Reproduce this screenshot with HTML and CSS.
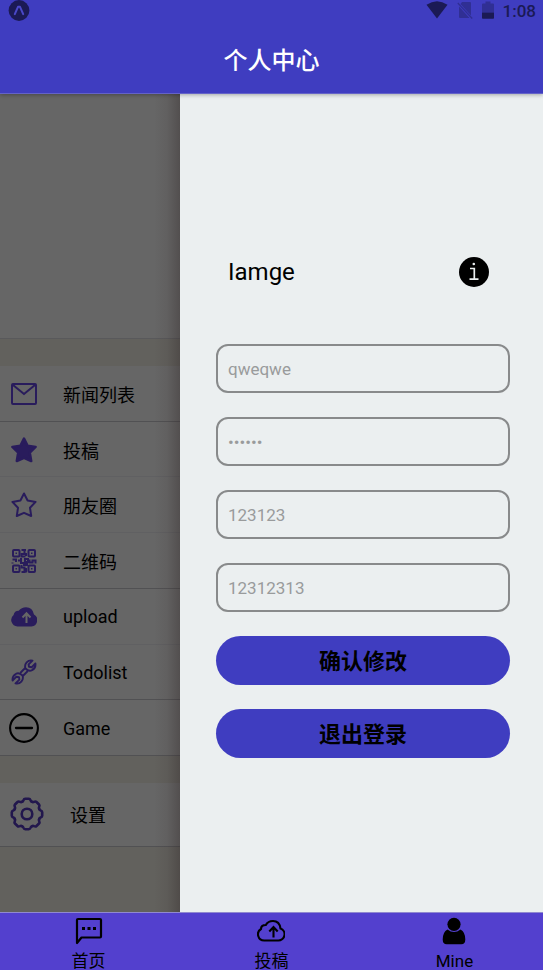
FILE: index.html
```html
<!DOCTYPE html>
<html lang="zh-CN">
<head>
<meta charset="utf-8">
<meta name="viewport" content="width=device-width, initial-scale=1">
<title>个人中心</title>
<link rel="stylesheet" href="styles.css">
</head>
<body>
<header class="header">
  <div class="status">
    <svg class="status-app" width="22" height="22" viewBox="0 0 22 22"><circle cx="11" cy="10.5" r="10.4" fill="#1b1a55"/><path d="M6.800 14.200 10 6.800h2l3.200 7.400" fill="none" stroke="#4a48c8" stroke-width="2" stroke-linecap="round" stroke-linejoin="round"/></svg>
    <div class="status-right">
      <svg width="22" height="18" viewBox="0 0 22 18"><path d="M.5 3.800Q11-3.200 21.500 3.800L11 17.500Z" fill="#1b1a55"/></svg>
      <svg width="16" height="18" viewBox="0 0 16 18"><path d="M5 1h8q1 0 1 1v12.500L3.500 3ZM2 5.500 12.500 17H3q-1 0-1-1Z" fill="#302f94"/><path d="M.8 2 15.200 17.500" stroke="#302f94" stroke-width="1.300"/></svg>
      <svg width="12" height="18" viewBox="0 0 12 18"><path d="M3.500.5h5v2H11q1 0 1 1v8H0v-8q0-1 1-1h2.500Z" fill="#302f94"/><path d="M0 11.500h12V17q0 .8-.8.8H.8Q0 17.800 0 17Z" fill="#1b1a55"/></svg>
      <span class="clock">1:08</span>
    </div>
  </div>
  <h1 class="title">个人中心</h1>
</header>

<main class="body">
  <nav class="menu" aria-label="菜单">
    <div class="banner"></div>
    <div class="list">
      <a class="row strong" href="#"><svg class="icon" viewBox="0 0 26 26"><rect x="1" y="3" width="24" height="20" rx="1" fill="none" stroke="currentColor" stroke-width="2"/><path d="m2 4 11 9L24 4" fill="none" stroke="currentColor" stroke-width="2"/></svg>新闻列表</a>
      <a class="row" href="#"><svg class="icon" viewBox="0 0 26 26"><path d="m13 1.500 3.600 7.200 8 1.200-5.800 5.700 1.400 8.400L13 20.800 5.800 24l1.400-8.400L1.400 9.900l8-1.200Z" fill="currentColor" stroke="currentColor" stroke-width="2.500" stroke-linejoin="round"/></svg>投稿</a>
      <a class="row" href="#"><svg class="icon" viewBox="0 0 26 26"><path d="m13 1.500 3.600 7 8 1.400-5.600 5.900 1.200 8.200-7.200-3.200L5.800 24 7 15.800 1.400 9.900l8-1.400Z" fill="none" stroke="currentColor" stroke-width="2" stroke-linejoin="round"/></svg>朋友圈</a>
      <a class="row strong" href="#"><svg class="icon" viewBox="0 0 26 26"><g fill="none" stroke="currentColor" stroke-width="2"><rect x="2" y="2" width="6.500" height="6.500" rx="1"/><rect x="17.500" y="2" width="6.500" height="6.500" rx="1"/><rect x="2" y="17.500" width="6.500" height="6.500" rx="1"/><rect x="17.500" y="17.500" width="6.500" height="6.500" rx="1"/><path d="M10.500 2H15M13.500 2v4h-3v2.500h4M15 5v3M1.500 11.500H5v2.500M1.500 14.500v1M7 12.500h3V10M10 12.500V15h4v-4h3v3h-3M12 17h4v-2.500M10.500 17v2.500h3V24h-3M15 20v4.500M18.500 11.500v3h3v-2h3v3"/></g><g fill="currentColor"><path d="M4.500 4.500H6V6H4.500zM20 4.500h1.500V6H20zM4.500 20H6v1.500H4.500zM20 20h1.500v1.500H20z"/></g></svg>二维码</a>
      <a class="row" href="#"><svg class="icon" viewBox="0 0 26 26"><path d="M6.500 22.500A6.500 6.500 0 0 1 2.600 11Q3.300 6.700 7.700 6.700 10.500 3.200 15 3.200q6.500 0 8 7.200A6.500 6.500 0 0 1 20.500 22.500Z" fill="currentColor"/><path d="M15.500 19V9.500M11.500 13.500l4-4.200 4 4.200" fill="none" stroke="#666" stroke-width="2"/></svg>upload</a>
      <a class="row strong" href="#"><svg class="icon" viewBox="0 0 26 26"><g fill="none" stroke="currentColor" stroke-width="1.900" stroke-linejoin="round"><path id="jaw" d="M21.500 1.600A6 6 0 0 0 14.500 9.500Q18 13 21 11.200 25 9 24.400 4.500L20.600 8.300 18 7.800 17.600 5.400Z"/><use href="#jaw" transform="rotate(180 13 13)"/><path d="m14.200 9-5 5M16.800 12l-5 5"/></g></svg>Todolist</a>
      <a class="row strong" href="#"><svg class="icon round" viewBox="0 0 30 30"><circle cx="15" cy="15" r="13.900" fill="none" stroke="currentColor" stroke-width="2.100"/><path d="M7 15h16" stroke="currentColor" stroke-width="2.300" stroke-linecap="round"/></svg>Game</a>
    </div>
    <a class="settings" href="#"><svg class="gear" viewBox="-17 -17 34 34"><defs><path id="tooth" d="M-5.050-12.200Q-4-12.300-3.600-13.600-3-15.200-1.800-15.200H1.800Q3-15.200 3.600-13.600 4-12.300 5.050-12.200"/></defs><g fill="none" stroke="currentColor" stroke-width="2.600" stroke-linecap="round"><use href="#tooth"/><use href="#tooth" transform="rotate(45)"/><use href="#tooth" transform="rotate(90)"/><use href="#tooth" transform="rotate(135)"/><use href="#tooth" transform="rotate(180)"/><use href="#tooth" transform="rotate(225)"/><use href="#tooth" transform="rotate(270)"/><use href="#tooth" transform="rotate(315)"/><circle r="5.300"/></g></svg>设置</a>
  </nav>

  <section class="drawer">
    <div class="profile">
      <h2 class="name">Iamge</h2>
      <svg width="30" height="30" viewBox="0 0 30 30"><circle cx="15" cy="15" r="15"/><path d="M11 11.500h4.300V22M10.500 22.200h9" fill="none" stroke="#ebeff0" stroke-width="1.700"/><circle cx="14.800" cy="7" r="1.300" fill="#ebeff0"/></svg>
    </div>
    <form class="form">
      <input class="field" type="text" aria-label="用户名" placeholder="qweqwe">
      <input class="field" type="password" aria-label="密码" value="qweqwe">
      <input class="field" type="text" aria-label="昵称" placeholder="123123">
      <input class="field" type="text" aria-label="电话" placeholder="12312313">
      <button class="button" type="button">确认修改</button>
      <button class="button" type="button">退出登录</button>
    </form>
  </section>
</main>

<nav class="tabs" aria-label="导航">
  <a class="tab" href="#"><svg viewBox="0 0 28 28"><path d="M2 26V3q0-1 1-1h22q1 0 1 1v16.500q0 1-1 1H6.500Z" fill="none" stroke="currentColor" stroke-width="2.200" stroke-linejoin="round"/><path d="M7 10h3v3H7zM12.500 10h3v3h-3zM18 10h3v3h-3z"/></svg>首页</a>
  <a class="tab" href="#"><svg viewBox="0 0 28 28"><path d="M7.200 23.500A6.200 6.200 0 0 1 4 12Q4 8 8.800 8 11 4 16 4q6.500 0 7.500 7.500A6.200 6.200 0 0 1 21 23.500Z" fill="none" stroke="currentColor" stroke-width="2.100"/><path d="M16.500 20.500V10M12.300 14.500l4.200-4.500 4.200 4.500" fill="none" stroke="currentColor" stroke-width="2.100"/></svg>投稿</a>
  <a class="tab" href="#"><svg viewBox="0 0 28 28"><circle cx="14" cy="7.300" r="6.600"/><path d="M7.500 12.500q6.500 5 13 0 4.800 2.500 4.800 10 0 4.700-4 4.700H6.700q-4 0-4-4.700 0-7.500 4.800-10Z"/></svg>Mine</a>
</nav>
</body>
</html>
```
FILE: styles.css
```css
* {
  box-sizing: border-box;
}

body {
  margin: 0;
  min-height: 100vh;
  display: flex;
  flex-direction: column;
  font-family: Roboto, "Noto Sans CJK SC", sans-serif;
  color: #000;
  background: #ebeff0;
}

a {
  color: inherit;
  text-decoration: none;
}

svg {
  display: block;
  flex: none;
}

.header {
  position: relative;
  z-index: 1;
  background: #3f3dc0;
  border-bottom: 1px solid #6462c8;
  box-shadow: 0 1px 4px rgba(0, 0, 0, 0.3);
}

.status {
  display: flex;
  justify-content: space-between;
  height: 24px;
  padding: 0 7px 0 8px;
}

.status-right {
  display: flex;
  align-items: flex-start;
  gap: 9px;
  padding-top: 1px;
  color: #1b1a55;
}

.clock {
  font-size: 17px;
  line-height: 20px;
  font-weight: 500;
}

.title {
  margin: 0;
  padding: 19px 0 14px;
  font-size: 24px;
  line-height: 36px;
  font-weight: 500;
  text-align: center;
  color: #fff;
}

.body {
  flex: 1;
  display: grid;
  grid-template-columns: 180px 1fr;
}

.menu {
  position: relative;
  background: #62615d;
}

.menu::after {
  content: "";
  position: absolute;
  inset: 0 0 0 auto;
  width: 26px;
  background: linear-gradient(to left, rgba(45, 35, 35, 0.35), rgba(60, 50, 50, 0.12) 50%, rgba(60, 50, 50, 0));
  pointer-events: none;
}

.banner {
  height: 245px;
  border-bottom: 1px solid #59595b;
}

.banner,
.row,
.settings {
  background: #666;
}

.list {
  display: grid;
  grid-auto-rows: 1fr;
  height: 390px;
  margin: 27px 0;
}

.row {
  display: flex;
  align-items: center;
  padding: 1px 0 0 11px;
  border-bottom: 1px solid #606062;
  font-size: 18px;
}

.strong {
  border-color: #515153;
}

.icon {
  width: 26px;
  height: 26px;
  margin-right: 26px;
  color: #291c5c;
}

.round {
  width: 30px;
  height: 30px;
  margin: 0 24px 0 -2px;
  color: #000;
}

.settings {
  display: flex;
  align-items: center;
  gap: 26px;
  height: 64px;
  padding: 0 0 2px 10px;
  border-bottom: 1px solid #515153;
  font-size: 18px;
}

.gear {
  width: 34px;
  height: 34px;
  color: #22174d;
}

.drawer {
  padding: 162px 33px 24px 36px;
}

.profile {
  display: flex;
  align-items: center;
  justify-content: space-between;
  padding: 0 21px 0 12px;
}

.name {
  margin: 0;
  font-size: 24px;
  line-height: 32px;
  font-weight: 400;
}

.form {
  display: grid;
  gap: 24px;
  margin-top: 56px;
}

.field {
  width: 100%;
  height: 49px;
  padding: 0 10px;
  border: 2px solid #888a8b;
  border-radius: 12px;
  background: transparent;
  font-family: inherit;
  font-size: 17px;
  color: #999b9c;
}

.field::placeholder {
  color: #999b9c;
}

.button {
  height: 49px;
  padding: 0 0 3px;
  border: 0;
  border-radius: 25px;
  background: #3f3dc0;
  font-family: inherit;
  font-size: 22px;
  font-weight: 700;
  color: #000;
}

.tabs {
  display: grid;
  grid-template-columns: 15fr 16fr 15fr;
  height: 58px;
  border-top: 1px solid #9089d0;
  background: #5340ce;
}

.tab {
  display: flex;
  flex-direction: column;
  align-items: center;
  padding-top: 4px;
  font-size: 17px;
  line-height: 24px;
}

.tab svg {
  width: 28px;
  height: 28px;
  margin-bottom: 4px;
}
```
